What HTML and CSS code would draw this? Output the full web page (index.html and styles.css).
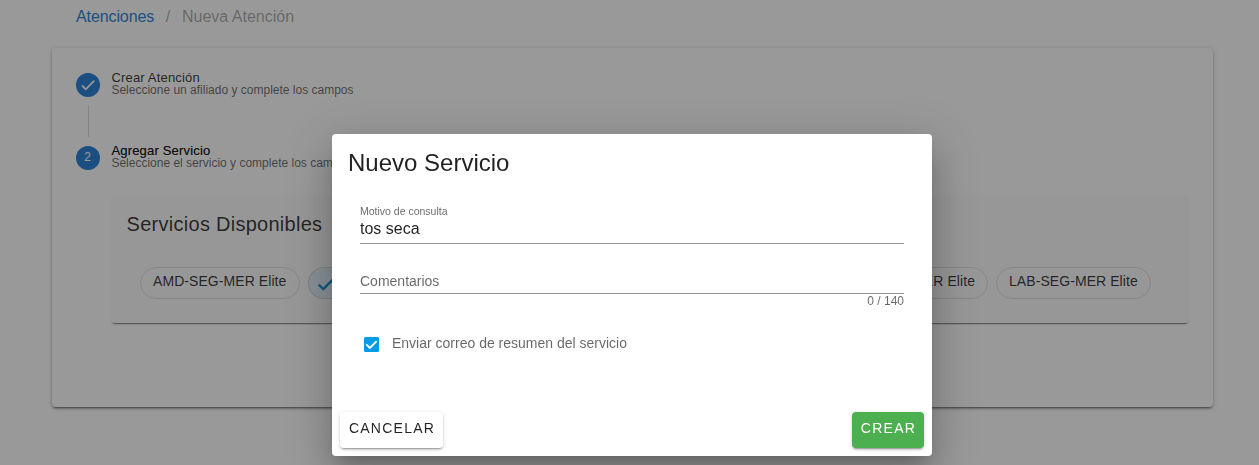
FILE: index.html
```html
<!DOCTYPE html>
<html lang="es">
<head>
<meta charset="utf-8">
<title>Nueva Atención</title>
<link rel="stylesheet" href="styles.css">
</head>
<body>
<main class="page">
  <nav class="breadcrumbs"><a class="crumb-link">Atenciones</a><span class="crumb-sep">/</span><span class="crumb-current">Nueva Atención</span></nav>
  <section class="card">
    <div class="step">
      <span class="step-dot"><svg width="18" height="18" viewBox="0 0 24 24"><path fill="#fff" stroke="#fff" stroke-width=".5" d="M21 7 9 19l-5.500-5.500 1.410-1.410L9 16.170 19.590 5.590z"/></svg></span>
      <div class="step-text"><div class="step-title">Crear Atención</div><div class="step-sub">Seleccione un afiliado y complete los campos</div></div>
    </div>
    <div class="step-line"></div>
    <div class="step step-active">
      <span class="step-dot"><span class="step-number">2</span></span>
      <div class="step-text"><div class="step-title">Agregar Servicio</div><div class="step-sub">Seleccione el servicio y complete los campos</div></div>
    </div>
    <div class="services">
      <h2 class="services-title">Servicios Disponibles</h2>
      <div class="chips">
        <span class="chip chip-amd">AMD-SEG-MER Elite</span>
        <span class="chip chip-selected"><svg width="22" height="22" viewBox="0 0 24 24"><path fill="#0288d1" stroke="#0288d1" stroke-width=".7" d="M21 7 9 19l-5.500-5.500 1.410-1.410L9 16.170 19.590 5.590z"/></svg></span>
        <span class="chip chip-hidden">ENF-SEG-MER Elite</span>
        <span class="chip chip-lab">LAB-SEG-MER Elite</span>
      </div>
    </div>
  </section>
</main>
<div class="overlay"></div>
<div class="dialog" role="dialog">
  <h1 class="dialog-title">Nuevo Servicio</h1>
  <div class="form">
    <div class="field field-reason"><label class="field-label">Motivo de consulta</label><div class="field-value">tos seca</div></div>
    <div class="field field-comments"><div class="field-placeholder">Comentarios</div></div>
    <div class="counter"><span>0 / 140</span></div>
    <div class="check-row">
      <svg class="checkbox" width="15" height="15" viewBox="0 0 15 15"><rect width="15" height="15" rx="1.500" fill="#039be5"/><path d="M2.300 7.300 5.900 10.900l6.800-6.800" fill="none" stroke="#fff" stroke-width="1.800"/></svg>
      <span class="check-label">Enviar correo de resumen del servicio</span>
    </div>
  </div>
  <div class="actions">
    <button class="btn btn-cancel"><span>CANCELAR</span></button>
    <button class="btn btn-create"><span>CREAR</span></button>
  </div>
</div>
</body>
</html>
```
FILE: styles.css
```css
* { box-sizing: border-box; }
body { margin: 0; height: 465px; overflow: hidden; background: #fff; font-family: "Liberation Sans", Arial, sans-serif; color: rgba(0,0,0,.87); }
.page { height: 465px; padding: 5px 46px 0 52px; }
.breadcrumbs { display: flex; height: 43px; padding-left: 24px; font-size: 16px; line-height: 23px; white-space: nowrap; }
.crumb-link { width: 78px; letter-spacing: -.1px; color: #1976d2; }
.crumb-sep { width: 28px; text-align: center; color: rgba(0,0,0,.38); }
.crumb-current { color: rgba(0,0,0,.38); }
.card { height: 359px; padding: 24px 24px 0; border-radius: 4px; background: #fff; box-shadow: 0 3px 1px -2px rgba(0,0,0,.3), 0 2px 2px rgba(0,0,0,.24), 0 1px 5px rgba(0,0,0,.2); }
.step { display: flex; gap: 11px; height: 33px; }
.step-dot { display: flex; align-items: center; justify-content: center; width: 24px; height: 24px; margin-top: 1px; border-radius: 50%; background: #1976d2; color: #fff; font-size: 12px; }
.step-number { padding: 0 1px 2px 0; }
.step-text { padding-left: .4px; white-space: nowrap; color: rgba(0,0,0,.87); }
.step-title { font-size: 13px; line-height: 12px; letter-spacing: .18px; }
.step-sub { font-size: 12px; line-height: 13px; color: rgba(0,0,0,.65); }
.step-active .step-title { color: #000; text-shadow: 0 0 0 rgba(0,0,0,.5); }
.step-line { width: 1px; height: 32px; margin: 0 0 8px 12px; background: rgba(0,0,0,.14); }
.services { height: 128px; margin: 17px 0 0 35px; padding: 14px 15px 0; border-radius: 4px; background: #fcfcfc; box-shadow: 0 3px 1px -2px rgba(0,0,0,.35), 0 2px 2px -1px rgba(0,0,0,.3); }
.services-title { margin: 0; padding-left: .6px; font-size: 20px; line-height: 30px; font-weight: 400; letter-spacing: .27px; }
.chips { display: flex; gap: 8px; margin: 28px 0 0 14px; }
.chip { height: 32px; padding: 0 12px; border: 1px solid rgba(0,0,0,.12); border-radius: 16px; font-size: 14px; line-height: 27px; letter-spacing: .07px; white-space: nowrap; }
.chip-amd { width: 160px; }
.chip-selected { width: 504px; padding: 5px 6px; background: #e4f2fb; }
.chip-hidden { width: 168px; text-align: right; }
.chip-lab { width: 155px; }
.overlay { position: fixed; inset: 0; background: rgba(33,33,33,.46); }
.dialog { position: absolute; left: 332px; top: 134px; display: flex; flex-direction: column; width: 600px; height: 322px; border-radius: 4px; background: #fff; box-shadow: 0 11px 15px -7px rgba(0,0,0,.2), 0 24px 38px 3px rgba(0,0,0,.14), 0 9px 46px 8px rgba(0,0,0,.12); }
.dialog-title { margin: 0; padding: 12px 16px 0; height: 70px; font-size: 24px; line-height: 34px; font-weight: 400; }
.form { flex: 1; padding: 0 28px; }
.field { border-bottom: 1px solid rgba(0,0,0,.42); white-space: nowrap; }
.field-reason { height: 40px; }
.field-label { display: block; font-size: 10.5px; line-height: 14px; color: rgba(0,0,0,.6); }
.field-value { font-size: 16px; line-height: 22px; }
.field-comments { height: 50px; padding-top: 27px; }
.field-placeholder { font-size: 14px; line-height: 20px; color: rgba(0,0,0,.6); }
.counter { height: 14px; margin-top: 0; font-size: 12px; line-height: 14px; text-align: right; color: rgba(0,0,0,.6); }
.check-row { display: flex; gap: 13px; margin-top: 29px; padding-left: 4px; }
.checkbox { display: block; }
.check-label { font-size: 14px; line-height: 12px; color: rgba(0,0,0,.6); }
.actions { display: flex; justify-content: space-between; padding: 8px; }
.btn { height: 36px; padding: 0 0 4px 1px; border: 0; border-radius: 4px; font-family: inherit; font-size: 14px; letter-spacing: 1.250px; box-shadow: 0 3px 1px -2px rgba(0,0,0,.2), 0 2px 2px rgba(0,0,0,.14), 0 1px 5px rgba(0,0,0,.12); }
.btn-cancel { width: 103px; background: #fff; color: rgba(0,0,0,.87); }
.btn-create { width: 72px; background: #4caf50; color: #fff; }
```
